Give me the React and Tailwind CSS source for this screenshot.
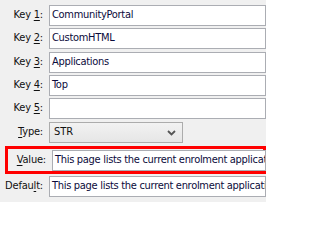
import React from "react";

const font = { fontFamily: '"DejaVu Sans Condensed", "DejaVu Sans", sans-serif' };

function Label({ pre, u, post }) {
  return (
    <div className="w-[44px] shrink-0 text-right pr-[1px] text-[11px] tracking-[-0.2px] text-[#111]">
      {pre}
      <span className="underline underline-offset-2">{u}</span>
      {post}
    </div>
  );
}

function Field({ value = "", w = "w-[217px]" }) {
  return (
    <div className={`${w} h-[21px] shrink-0 border border-[#abadb3] bg-white flex items-center pl-[2px] overflow-hidden whitespace-nowrap text-[11px] tracking-[-0.3px] text-[#0b0b3b]`}>
      {value}
    </div>
  );
}

export default function App() {
  const v = "This page lists the current enrolment applications awaiting approval";
  return (
    <div className="w-[266px] h-[202px] bg-[#f0f0f0] overflow-hidden pt-[5px]" style={font}>
      <div className="flex items-center gap-[5px]">
        <Label pre="Key " u="1" post=":" />
        <Field value="CommunityPortal" />
      </div>
      <div className="flex items-center gap-[5px] mt-[2px]">
        <Label pre="Key " u="2" post=":" />
        <Field value="CustomHTML" />
      </div>
      <div className="flex items-center gap-[5px] mt-[3px]">
        <Label pre="Key " u="3" post=":" />
        <Field value="Applications" />
      </div>
      <div className="flex items-center gap-[5px] mt-[2px]">
        <Label pre="Key " u="4" post=":" />
        <Field value="Top" />
      </div>
      <div className="flex items-center gap-[5px] mt-[2px]">
        <Label pre="Key " u="5" post=":" />
        <Field value="" />
      </div>
      <div className="flex items-center gap-[5px] mt-[3px]">
        <Label pre="" u="T" post="ype:" />
        <div className="w-[134px] h-[21px] border border-[#acacac] bg-gradient-to-b from-[#f2f2f2] to-[#e6e6e6] flex items-center justify-between pl-[4px] pr-[6px] text-[11px] text-[#111]">
          <span>STR</span>
          <svg width="9" height="6" viewBox="0 0 9 6">
            <path d="M1 1 L4.5 4.5 L8 1" fill="none" stroke="#555" strokeWidth="1.8" />
          </svg>
        </div>
      </div>
      <div className="mt-[3px] ml-[5px] w-[261px] h-[28px] border-[3px] border-[#ff0000] flex items-center">
        <div className="w-[39px] shrink-0 text-right pr-[1px] text-[11px] tracking-[-0.2px] text-[#111]">
          <span className="underline underline-offset-2">V</span>alue:
        </div>
        <div className="ml-[5px]">
          <Field value={v} w="w-[214px]" />
        </div>
      </div>
      <div className="flex items-center gap-[5px] mt-[2px]">
        <Label pre="Defau" u="l" post="t:" />
        <Field value={v} />
      </div>
    </div>
  );
}
